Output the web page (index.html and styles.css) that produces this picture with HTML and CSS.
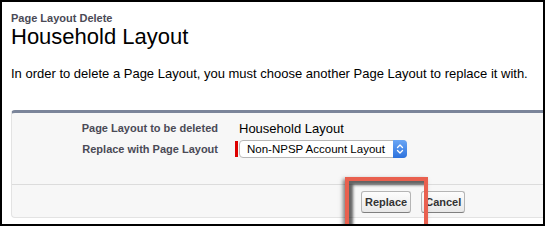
FILE: index.html
```html
<!DOCTYPE html>
<html lang="en">
<head>
    <meta charset="UTF-8">
    <meta name="viewport" content="width=device-width, initial-scale=1.0">
    <title>Page Layout Delete</title>
    <link rel="stylesheet" href="styles.css">
</head>
<body>
    <div class="frame">
        <div class="page-header">
            <div class="page-type">Page Layout Delete</div>
            <h1 class="page-title">Household Layout</h1>
        </div>
        <p class="intro">In order to delete a Page Layout, you must choose another Page Layout to replace it with.</p>

        <div class="panel">
            <div class="panel-body">
                <div class="field-row">
                    <div class="field-label">Page Layout to be deleted</div>
                    <div class="field-value">Household Layout</div>
                </div>
                <div class="field-row">
                    <div class="field-label">Replace with Page Layout</div>
                    <div class="field-value required">
                        <span class="required-bar"></span>
                        <div class="select-box">
                            <span class="select-text">Non-NPSP Account Layout</span>
                            <span class="select-arrow">
                                <svg width="8" height="12" viewBox="0 0 8 12">
                                    <path d="M1.5 4.5 L4 2 L6.5 4.5 M1.5 7.5 L4 10 L6.5 7.5" fill="none" stroke="#fff" stroke-width="1.3" stroke-linecap="round" stroke-linejoin="round"/>
                                </svg>
                            </span>
                        </div>
                    </div>
                </div>
            </div>
            <div class="panel-footer">
                <button class="btn">Replace</button>
                <button class="btn">Cancel</button>
            </div>
        </div>

        <div class="highlight"></div>
    </div>
</body>
</html>
```

FILE: styles.css
```css
body {
    margin: 0;
    font-family: "Liberation Sans", Arial, sans-serif;
    background-color: #fff;
}
.frame {
    position: relative;
    box-sizing: border-box;
    width: 545px;
    height: 226px;
    border: 2px solid #000;
    overflow: hidden;
    padding: 10px 0 0 9px;
    color: #000;
}
.page-type {
    font-size: 11px;
    font-weight: bold;
    color: #4a4a56;
    line-height: 13px;
}
.page-title {
    margin: 0;
    font-size: 22px;
    font-weight: normal;
    line-height: 24px;
}
.intro {
    margin: 17px 0 0 0;
    font-size: 13px;
    line-height: 16px;
    color: #000;
}
.panel {
    margin-top: 28px;
    margin-right: -20px;
    background-color: #f7f7f7;
    border-top: 3px solid #7b859a;
    border-left: 1px solid #e3e3e3;
    border-bottom: 1px solid #e3e3e3;
    border-radius: 4px 0 0 4px;
}
.panel-body {
    padding: 6px 0 0 0;
    height: 65px;
    border-bottom: 1px solid #dcdcdc;
}
.field-row {
    display: flex;
    align-items: center;
    height: 18px;
    margin-bottom: 3px;
}
.field-label {
    width: 206px;
    text-align: right;
    font-size: 11px;
    font-weight: bold;
    color: #4a4a56;
}
.field-value {
    margin-left: 17px;
    padding-left: 4px;
    font-size: 13px;
    white-space: nowrap;
}
.field-value.required {
    display: flex;
    align-items: center;
    padding-left: 0;
}
.required-bar {
    width: 3px;
    height: 16px;
    background-color: #d00;
    margin-right: 1px;
}
.select-box {
    display: flex;
    align-items: center;
    box-sizing: border-box;
    width: 168px;
    height: 18px;
    background-color: #fff;
    border: 1px solid #b8b8b8;
    border-radius: 4px;
}
.select-text {
    flex: 1;
    padding-left: 7px;
    font-size: 11.5px;
    line-height: 16px;
    white-space: nowrap;
    overflow: hidden;
}
.select-arrow {
    display: flex;
    align-items: center;
    justify-content: center;
    width: 14px;
    height: 18px;
    margin: -1px -1px -1px 0;
    background: linear-gradient(#6aa6f5, #2d72dd);
    border-radius: 0 4px 4px 0;
}
.panel-footer {
    padding: 6px 0 4px 349px;
    display: flex;
    gap: 10px;
}
.btn {
    height: 22px;
    padding: 0 3px;
    font-family: "Liberation Sans", Arial, sans-serif;
    font-size: 11px;
    font-weight: bold;
    color: #333;
    background: linear-gradient(#fdfdfd, #e8e8e8);
    border: 1px solid #b5b5b5;
    border-bottom-color: #7f7f7f;
    border-radius: 3px;
}
.highlight {
    position: absolute;
    left: 343px;
    top: 175px;
    width: 75px;
    height: 60px;
    border: 4px solid #e9604f;
    box-shadow: -2px 2px 4px rgba(0, 0, 0, 0.5), inset 4px 4px 3px rgba(0, 0, 0, 0.6);
}
```
